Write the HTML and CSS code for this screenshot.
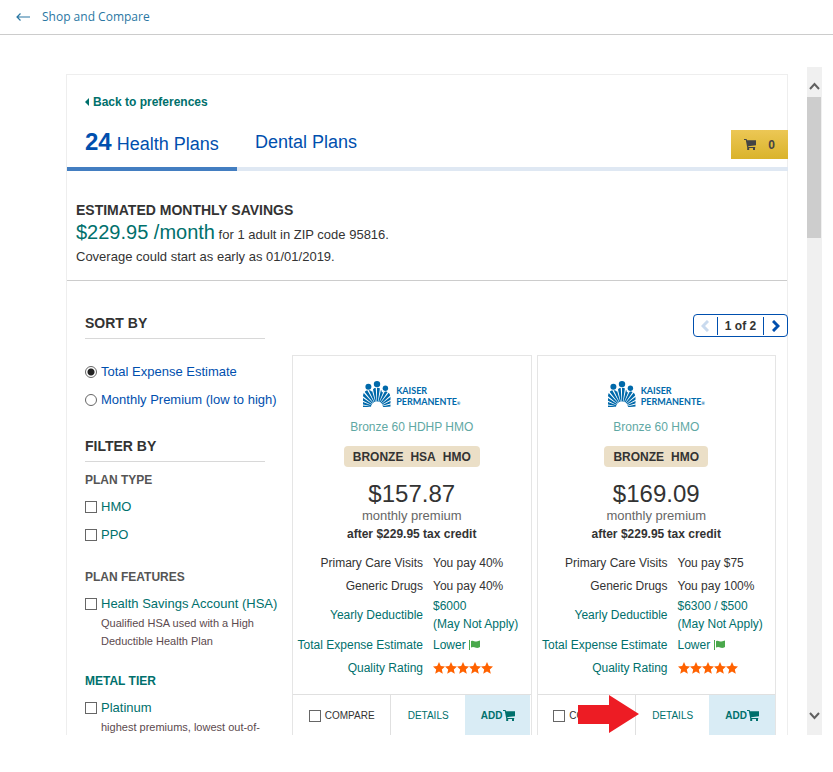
FILE: index.html
```html
<!DOCTYPE html>
<html lang="en">
<head>
    <meta charset="UTF-8">
    <meta name="viewport" content="width=device-width, initial-scale=1.0">
    <title>Shop and Compare</title>
    <link rel="stylesheet" href="styles.css">
</head>
<body>
    <svg class="sprite" aria-hidden="true">
        <symbol id="cart" viewBox="0 0 12 11">
            <path d="M0 0h2.600l.4 1.200H12v5L4.200 7.200l.2.700h6.800v1.100H3.300L1.800 1H0z"/>
            <rect x="3.200" y="9" width="2" height="2"/>
            <rect x="9" y="9" width="2" height="2"/>
        </symbol>
        <symbol id="flag" viewBox="0 0 12 10">
            <path d="M0 0h1v10H0zM2 1.200C4-.2 5.500 1.800 7.500 1.500 9 1.300 9.700.900 11 .5V7C9.500 7.600 8.500 8.200 7 7.800 5 7.200 4 6.500 2 7.600z"/>
        </symbol>
        <symbol id="stars" viewBox="0 0 60 12">
            <path id="star" d="M6 0l1.800 4.100 4.200.4-3.200 2.900 1 4.400L6 9.500l-3.800 2.300 1-4.400L0 4.500l4.200-.4z"/>
            <use href="#star" x="12"/>
            <use href="#star" x="24"/>
            <use href="#star" x="36"/>
            <use href="#star" x="48"/>
        </symbol>
        <symbol id="people" viewBox="0 0 28 27">
            <clipPath id="bodies">
                <path d="M0 27V17c0-4 2-7 5-7 2 0 3 .8 4 1.800C9.500 9 11.500 7.500 14 7.500s4.500 1.500 5 5c1-.6 2-.9 3.200-.9 3.300 0 5.300 2.400 5.300 6.400v9z"/>
            </clipPath>
            <g clip-path="url(#bodies)">
                <path d="M1 27.500a13 13 0 0 1 26 0" fill="none" stroke="currentColor" stroke-width="14" stroke-dasharray="2 .9"/>
            </g>
            <circle cx="5.400" cy="6.700" r="3"/>
            <circle cx="14" cy="4.100" r="3.200"/>
            <circle cx="22.400" cy="8.200" r="2.700"/>
        </symbol>
    </svg>

    <header class="top-bar">
        <a href="#" class="shop-link">
            <svg class="arrow-left" viewBox="0 0 14 8"><path d="M14 4H1M4.500.5L1 4l3.500 3.500" fill="none" stroke="currentColor" stroke-width="1.200"/></svg>
            Shop and Compare
        </a>
    </header>

    <div class="viewer">
        <main class="panel">
            <a href="#" class="back-link"><span class="caret"></span>Back to preferences</a>

            <nav class="tabs">
                <a href="#" class="tab active"><b>24</b> Health Plans</a>
                <a href="#" class="tab">Dental Plans</a>
                <button class="cart-button" aria-label="Cart"><svg class="cart-icon"><use href="#cart"/></svg>0</button>
            </nav>

            <section class="savings">
                <h2>ESTIMATED MONTHLY SAVINGS</h2>
                <p class="amount"><span>$229.95 /month</span> for 1 adult in ZIP code 95816.</p>
                <p>Coverage could start as early as 01/01/2019.</p>
            </section>

            <div class="content">
                <aside class="sidebar">
                    <h2>SORT BY</h2>
                    <div class="sort-options">
                        <label class="option"><input type="radio" name="sort" checked>Total Expense Estimate</label>
                        <label class="option"><input type="radio" name="sort">Monthly Premium (low to high)</label>
                    </div>

                    <h2>FILTER BY</h2>
                    <h3>PLAN TYPE</h3>
                    <div class="filter">
                        <label class="option"><input type="checkbox">HMO</label>
                        <label class="option"><input type="checkbox">PPO</label>
                    </div>
                    <h3>PLAN FEATURES</h3>
                    <div class="filter">
                        <label class="option"><input type="checkbox">Health Savings Account (HSA)</label>
                        <p class="hint">Qualified HSA used with a High Deductible Health Plan</p>
                    </div>
                    <h3 class="teal">METAL TIER</h3>
                    <div class="filter">
                        <label class="option"><input type="checkbox">Platinum</label>
                        <p class="hint">highest premiums, lowest out-of-</p>
                    </div>
                </aside>

                <section class="results">
                    <div class="pager">
                        <button class="prev" aria-label="Previous page"><svg viewBox="0 0 8 12"><path d="M7 1L2 6l5 5"/></svg></button>
                        <span>1 of 2</span>
                        <button class="next" aria-label="Next page"><svg viewBox="0 0 8 12"><path d="M1 1l5 5-5 5"/></svg></button>
                    </div>

                    <div class="plans">
                        <article class="plan">
                            <div class="plan-body">
                                <div class="logo"><svg><use href="#people"/></svg><span>KAISER<br>PERMANENTE<small>®</small></span></div>
                                <a href="#" class="plan-name">Bronze 60 HDHP HMO</a>
                                <div class="badge"><span>BRONZE</span><span>HSA</span><span>HMO</span></div>
                                <div class="price">$157.87</div>
                                <div class="premium">monthly premium</div>
                                <div class="credit">after $229.95 tax credit</div>
                                <table class="details">
                                    <tr><th>Primary Care Visits</th><td>You pay 40%</td></tr>
                                    <tr><th>Generic Drugs</th><td>You pay 40%</td></tr>
                                    <tr class="teal"><th>Yearly Deductible</th><td>$6000<br>(May Not Apply)</td></tr>
                                    <tr class="teal"><th>Total Expense Estimate</th><td>Lower <svg class="flag"><use href="#flag"/></svg></td></tr>
                                    <tr class="teal"><th>Quality Rating</th><td><svg class="stars" role="img" aria-label="5 stars"><use href="#stars"/></svg></td></tr>
                                </table>
                            </div>
                            <div class="plan-footer">
                                <label class="compare"><input type="checkbox">COMPARE</label>
                                <button class="details-button">DETAILS</button>
                                <button class="add-button">ADD<svg class="cart-icon"><use href="#cart"/></svg></button>
                            </div>
                        </article>

                        <article class="plan">
                            <div class="plan-body">
                                <div class="logo"><svg><use href="#people"/></svg><span>KAISER<br>PERMANENTE<small>®</small></span></div>
                                <a href="#" class="plan-name">Bronze 60 HMO</a>
                                <div class="badge"><span>BRONZE</span><span>HMO</span></div>
                                <div class="price">$169.09</div>
                                <div class="premium">monthly premium</div>
                                <div class="credit">after $229.95 tax credit</div>
                                <table class="details">
                                    <tr><th>Primary Care Visits</th><td>You pay $75</td></tr>
                                    <tr><th>Generic Drugs</th><td>You pay 100%</td></tr>
                                    <tr class="teal"><th>Yearly Deductible</th><td>$6300 / $500<br>(May Not Apply)</td></tr>
                                    <tr class="teal"><th>Total Expense Estimate</th><td>Lower <svg class="flag"><use href="#flag"/></svg></td></tr>
                                    <tr class="teal"><th>Quality Rating</th><td><svg class="stars" role="img" aria-label="5 stars"><use href="#stars"/></svg></td></tr>
                                </table>
                            </div>
                            <div class="plan-footer">
                                <label class="compare"><input type="checkbox">COMPARE</label>
                                <button class="details-button">DETAILS</button>
                                <button class="add-button">ADD<svg class="cart-icon"><use href="#cart"/></svg></button>
                                <svg class="pointer" viewBox="0 0 61 38"><path d="M0 10h31V0l30 19-30 19V29H0z"/></svg>
                            </div>
                        </article>
                    </div>
                </section>
            </div>
        </main>

        <div class="scrollbar">
            <svg viewBox="0 0 11 8"><path d="M1 7l4.500-5L10 7"/></svg>
            <div class="thumb"></div>
            <svg viewBox="0 0 11 8"><path d="M1 1l4.500 5L10 1"/></svg>
        </div>
    </div>
</body>
</html>
```

FILE: styles.css
```css
* {
    box-sizing: border-box;
}
body {
    margin: 0;
    background-color: #fff;
    color: #333;
    font-family: "Liberation Sans", Arial, sans-serif;
    font-size: 13px;
    line-height: 18px;
}
h2, h3, p {
    margin: 0;
}
a {
    text-decoration: none;
}
button {
    margin: 0;
    padding: 0;
    border: none;
    background: none;
    font-family: inherit;
    cursor: pointer;
}
svg {
    fill: currentColor;
}
.sprite {
    position: absolute;
    width: 0;
    height: 0;
}
.teal {
    color: #00706c;
}

/* top bar */
.top-bar {
    height: 35px;
    padding-left: 16px;
    border-bottom: 1px solid #ccc;
}
.shop-link {
    display: inline-flex;
    align-items: center;
    gap: 12px;
    height: 34px;
    color: #2a77a3;
    font-family: "Open Sans", sans-serif;
    font-size: 12px;
}
.arrow-left {
    width: 14px;
    height: 8px;
}

/* scrolling area */
.viewer {
    display: flex;
    height: calc(100vh - 104px);
    margin: 32px 11px 0 66px;
    overflow: hidden;
}
.panel {
    flex: 1;
    margin: 7px 19px 0 0;
    border: 1px solid #eee;
    border-bottom: none;
}
.scrollbar {
    display: flex;
    flex-direction: column;
    align-items: center;
    width: 15px;
    padding: 15px 0;
    background-color: #f0f0f0;
    color: #606060;
}
.scrollbar svg {
    width: 11px;
    height: 8px;
    fill: none;
    stroke: currentColor;
    stroke-width: 2;
}
.scrollbar svg:last-child {
    margin-top: auto;
}
.thumb {
    width: 100%;
    height: 141px;
    margin-top: 7px;
    border-right: 1px solid #f0f0f0;
    background-color: #cdcdcd;
}

.back-link {
    display: flex;
    align-items: center;
    gap: 4px;
    padding: 18px 18px 0;
    color: #00706c;
    font-size: 12px;
    font-weight: bold;
}
.caret {
    border: 4px solid transparent;
    border-right-color: currentColor;
    border-left: none;
}

/* tabs */
.tabs {
    display: flex;
    align-items: flex-start;
    height: 60px;
    margin-right: -1px;
    box-shadow: inset 0 -4px #dfe8f3;
}
.tab {
    height: 60px;
    padding: 18px 18px 0;
    color: #004fae;
    font-size: 18px;
    line-height: 26px;
}
.tab b {
    font-size: 24px;
}
.active {
    width: 170px;
    border-bottom: 4px solid #437ec1;
    white-space: nowrap;
}
.cart-button {
    display: flex;
    align-items: center;
    justify-content: center;
    gap: 12px;
    width: 57px;
    height: 29px;
    margin: 19px 0 0 auto;
    background: linear-gradient(#ecc755, #dab32b);
    color: #444;
    font-size: 12px;
    font-weight: bold;
}
.cart-icon {
    width: 12px;
    height: 11px;
}

.savings {
    padding: 30px 9px 14px;
    border-bottom: 1px solid #ccc;
}
h2 {
    font-size: 14px;
    line-height: 18px;
}
.amount {
    line-height: 27px;
}
.amount span {
    color: #00706c;
    font-size: 20px;
}

/* sidebar */
.content {
    display: flex;
    align-items: flex-start;
}
.sidebar {
    width: 225px;
    flex: none;
    padding: 33px 12px 0 18px;
}
.sidebar h2 {
    width: 180px;
    padding-bottom: 6px;
    border-bottom: 1px solid #d8d8d8;
}
.sort-options {
    padding: 24px 0 18px;
    color: #004fae;
}
.option {
    display: flex;
    align-items: center;
    gap: 4px;
    margin-bottom: 10px;
    white-space: nowrap;
}
input {
    flex: none;
    width: 12px;
    height: 12px;
    margin: 0;
    appearance: none;
    border: 1px solid #666;
    background-color: #fff;
}
input[type="radio"] {
    border-radius: 50%;
}
input[type="radio"]:checked {
    background: radial-gradient(#222 0 3px, #fff 4px);
}
input[type="checkbox"]:checked {
    background-color: #666;
}
.sidebar h3 {
    padding-top: 9px;
    font-size: 12px;
}
.sidebar h3:not(.teal) {
    color: #555;
}
.filter {
    padding: 9px 0 5px;
    color: #00706c;
}
.filter .option:has(+ .hint) {
    margin-bottom: 0;
}
.hint {
    width: 180px;
    padding: 1px 0 8px 16px;
    color: #5c4a4e;
    font-size: 11px;
}

/* results */
.results {
    flex: 1;
    margin-right: -1px;
}
.pager {
    display: flex;
    align-items: center;
    width: 95px;
    height: 23px;
    margin: 33px 0 18px auto;
    border: 1px solid #004fae;
    border-radius: 4px;
    color: #333;
    font-size: 12px;
    font-weight: bold;
}
.pager button {
    flex: 1;
    color: #004fae;
}
.pager svg {
    display: block;
    width: 8px;
    height: 12px;
    margin: 0 auto;
    fill: none;
    stroke: currentColor;
    stroke-width: 3;
}
.pager .prev {
    color: #c9daee;
}
.pager span {
    padding: 0 7px;
    border: solid #004fae;
    border-width: 0 1px;
}
.plans {
    display: grid;
    grid-template-columns: 1fr 1fr;
    gap: 5px;
    padding-right: 12px;
}
.plan {
    border: 1px solid #e5e5e5;
    text-align: center;
}
.plan-body {
    display: flex;
    flex-direction: column;
    align-items: center;
    padding: 24px 0 15px;
}
.logo {
    display: flex;
    align-items: flex-end;
    gap: 5px;
    color: #0069aa;
    font-family: Lato, sans-serif;
    font-size: 9px;
    font-weight: bold;
    line-height: 11px;
    text-align: left;
}
.logo svg {
    width: 28px;
    height: 27px;
}
.logo small {
    font-size: 4px;
    line-height: 4px;
}
.plan-name {
    padding-top: 11px;
    color: #5fa8a4;
    font-size: 12px;
}
.badge {
    display: flex;
    gap: 7px;
    margin: 10px 0 13px;
    padding: 2px 9px 1px;
    border-radius: 4px;
    background-color: #ebdfc7;
    font-size: 12px;
    font-weight: bold;
}
.price {
    font-size: 24px;
    line-height: 27px;
}
.premium {
    color: #666;
}
.credit {
    font-size: 12px;
    font-weight: bold;
}
.details {
    width: 100%;
    margin-top: 8px;
    border-spacing: 0;
    font-size: 12px;
    line-height: 18px;
}
.details th {
    width: 130px;
    height: 23px;
    padding: 0;
    font-weight: normal;
    text-align: right;
    white-space: nowrap;
}
.details td {
    padding: 0 0 0 10px;
    text-align: left;
    white-space: nowrap;
}
.flag {
    width: 12px;
    height: 10px;
    color: #4aa84c;
    vertical-align: middle;
}
.stars {
    display: block;
    width: 60px;
    height: 12px;
    color: #ff6200;
}

.plan-footer {
    position: relative;
    display: flex;
    height: 42px;
    border-top: 1px solid #e0e0e0;
    font-size: 10px;
}
.plan-footer .compare {
    display: flex;
    align-items: center;
    justify-content: center;
    flex: 98;
    gap: 4px;
}
.plan-footer button {
    color: #00706c;
    font-size: 10px;
}
.details-button {
    flex: 74;
    border-left: 1px solid #e0e0e0;
}
.plan-footer .add-button {
    display: flex;
    align-items: center;
    justify-content: center;
    flex: 66;
    background-color: #d9ecf5;
    font-weight: bold;
}
/* red arrow over the compare cell, aimed at DETAILS */
.pointer {
    position: absolute;
    top: 0;
    left: 40px;
    width: 61px;
    height: 38px;
    color: #ed1c24;
}
```
